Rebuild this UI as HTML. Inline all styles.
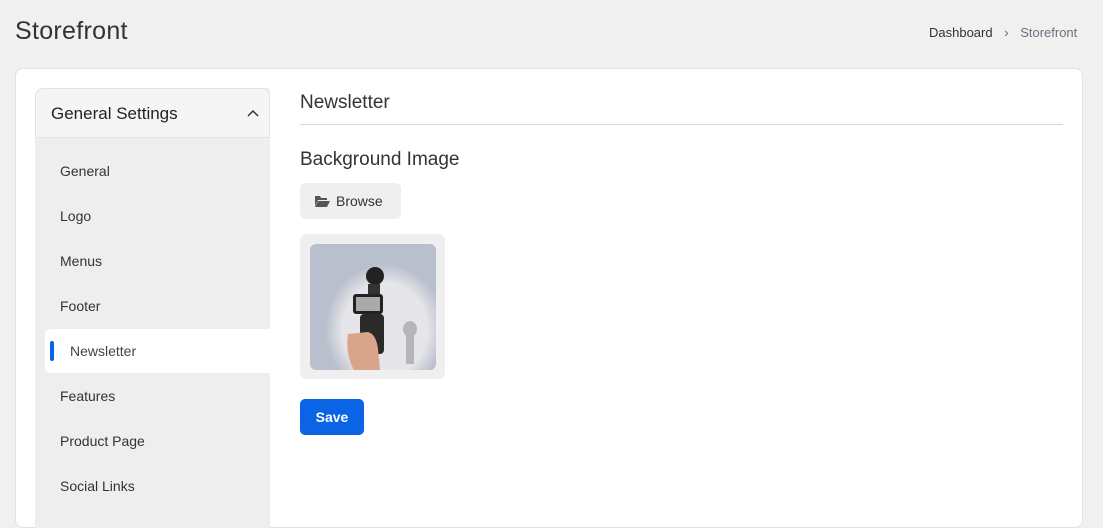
<!DOCTYPE html><html><head><style>
*{box-sizing:border-box;margin:0;padding:0}
body{width:1103px;height:515px;overflow:hidden;background:#f0f0f0;font-family:"Liberation Sans",sans-serif;color:#333;position:relative}
.a{position:absolute}
</style></head><body>
<div class="a" style="left:15px;top:17px;font-size:25px;color:#333;letter-spacing:0.3px">Storefront</div>
<div class="a" style="left:929px;top:25px;font-size:13px;color:#333">Dashboard <span style="margin:0 8px;color:#666">›</span> <span style="color:#6b7280">Storefront</span></div>
<div class="a" style="left:15px;top:68px;width:1068px;height:460px;background:#fff;border:1px solid #e2e2e2;border-radius:8px"></div>
<div class="a" style="left:35px;top:88px;width:235px;height:440px;background:#eeeeee;border-radius:8px 0 0 0"></div>
<div class="a" style="left:35px;top:88px;width:235px;height:50px;background:#f5f5f5;border:1px solid #e3e3e3;border-radius:8px 8px 0 0;font-size:17px;padding:15px 0 0 15px;color:#222">General Settings<svg style="position:absolute;right:10px;top:20px" width="12" height="10"><path d="M1 7 L6 2 L11 7" fill="none" stroke="#333" stroke-width="1.5"/></svg></div>
<div class="a" style="left:60px;top:162px;font-size:14px;line-height:18px">General</div>
<div class="a" style="left:60px;top:207px;font-size:14px;line-height:18px">Logo</div>
<div class="a" style="left:60px;top:252px;font-size:14px;line-height:18px">Menus</div>
<div class="a" style="left:60px;top:297px;font-size:14px;line-height:18px">Footer</div>
<div class="a" style="left:45px;top:329px;width:225px;height:44px;background:#fff;border-radius:6px 0 0 6px"></div>
<div class="a" style="left:50px;top:341px;width:4px;height:20px;background:#0b63e5;border-radius:2px"></div>
<div class="a" style="left:70px;top:342px;font-size:14px;line-height:18px;color:#444">Newsletter</div>
<div class="a" style="left:60px;top:387px;font-size:14px;line-height:18px">Features</div>
<div class="a" style="left:60px;top:432px;font-size:14px;line-height:18px">Product Page</div>
<div class="a" style="left:60px;top:477px;font-size:14px;line-height:18px">Social Links</div>
<div class="a" style="left:300px;top:92px;font-size:19px;color:#333">Newsletter</div>
<div class="a" style="left:300px;top:124px;width:763px;height:1px;background:#d6d6d6"></div>
<div class="a" style="left:300px;top:149px;font-size:19px;color:#333">Background Image</div>
<div class="a" style="left:300px;top:183px;width:101px;height:36px;background:#efefef;border-radius:5px;font-size:14px;padding:10px 0 0 36px;color:#333">Browse</div>
<svg class="a" style="left:315px;top:195px" width="15" height="12"><path d="M0 1h5l1 2h6v2H3L0 11z" fill="#555"/><path d="M3 6h12l-3 6H0z" fill="#555"/></svg>
<div class="a" style="left:300px;top:234px;width:145px;height:145px;background:#efefef;border-radius:6px"></div>
<div class="a" style="left:310px;top:244px;width:126px;height:126px;border-radius:6px;overflow:hidden;background:radial-gradient(ellipse 60px 65px at 75px 85px,#e6e6ea 70%,#b9bfcc 100%),#a9b0c0">
<svg width="126" height="126"><ellipse cx="100" cy="85" rx="7" ry="8" fill="#b5b5bb"/><rect x="96" y="90" width="8" height="30" fill="#b5b5bb"/>
<circle cx="65" cy="32" r="9" fill="#222"/><rect x="58" y="40" width="12" height="14" fill="#333"/>
<rect x="43" y="50" width="30" height="20" rx="3" fill="#222"/><rect x="46" y="53" width="24" height="14" fill="#aaa"/>
<rect x="50" y="70" width="24" height="40" rx="4" fill="#2a2a2a"/>
<path d="M38 90 Q35 110 44 126 L70 126 L68 105 Q66 90 58 88Z" fill="#d9a58a"/></svg></div>
<div class="a" style="left:300px;top:399px;width:64px;height:36px;background:#0b63e5;border-radius:5px;color:#fff;font-size:14px;font-weight:bold;text-align:center;line-height:36px">Save</div>
</body></html>
